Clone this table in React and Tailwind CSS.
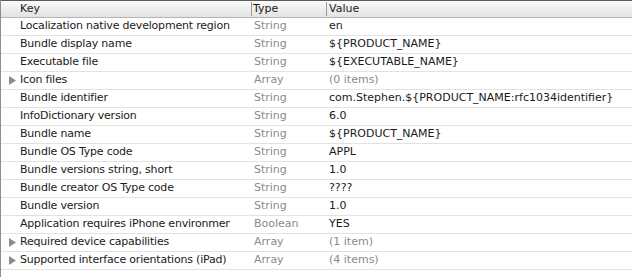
import React from "react";

const rows = [
  { key: "Localization native development region", type: "String", value: "en" },
  { key: "Bundle display name", type: "String", value: "${PRODUCT_NAME}" },
  { key: "Executable file", type: "String", value: "${EXECUTABLE_NAME}" },
  { key: "Icon files", type: "Array", value: "(0 items)", group: true },
  { key: "Bundle identifier", type: "String", value: "com.Stephen.${PRODUCT_NAME:rfc1034identifier}" },
  { key: "InfoDictionary version", type: "String", value: "6.0" },
  { key: "Bundle name", type: "String", value: "${PRODUCT_NAME}" },
  { key: "Bundle OS Type code", type: "String", value: "APPL" },
  { key: "Bundle versions string, short", type: "String", value: "1.0" },
  { key: "Bundle creator OS Type code", type: "String", value: "????" },
  { key: "Bundle version", type: "String", value: "1.0" },
  { key: "Application requires iPhone environment", type: "Boolean", value: "YES" },
  { key: "Required device capabilities", type: "Array", value: "(1 item)", group: true },
  { key: "Supported interface orientations (iPad)", type: "Array", value: "(4 items)", group: true },
];

function Triangle() {
  return (
    <svg width="7" height="9" viewBox="0 0 7 9" className="shrink-0">
      <path d="M0 0 L7 4.5 L0 9 Z" fill="#8c8c8c" />
    </svg>
  );
}

export default function App() {
  return (
    <div className="w-[632px] h-[277px] bg-white overflow-hidden font-['Lucida_Grande','DejaVu_Sans',sans-serif] text-[11px] text-[#1a1a1a]">
      <div className="h-full border-l border-[#8e8e8e] flex flex-col">
        <div className="h-[18px] border-t border-[#5a5a5a] border-b border-b-[#b5b5b5] bg-gradient-to-b from-[#fbfbfb] to-[#e3e3e3] flex items-center">
          <div className="w-[250px] pl-[19px]">Key</div>
          <div className="w-[75px] border-l border-[#9a9a9a] pl-[1px] leading-[14px]">Type</div>
          <div className="flex-1 border-l border-[#9a9a9a] pl-[2px] leading-[14px]">Value</div>
        </div>
        {rows.map((r) => (
          <div key={r.key} className="h-[18px] border-b border-[#e2e2e2] flex items-center">
            <div className="w-[250px] flex items-center overflow-hidden whitespace-nowrap">
              <div className="w-[19px] pl-[8px] flex items-center">{r.group && <Triangle />}</div>
              <span className="overflow-hidden w-[210px] tracking-[-0.2px]">{r.key}</span>
            </div>
            <div className="w-[75px] pl-[3px] text-[#8a8a8a]">{r.type}</div>
            <div className={`flex-1 pl-[3px] whitespace-nowrap ${r.group ? "text-[#8a8a8a]" : ""}`}>{r.value}</div>
          </div>
        ))}
      </div>
    </div>
  );
}
